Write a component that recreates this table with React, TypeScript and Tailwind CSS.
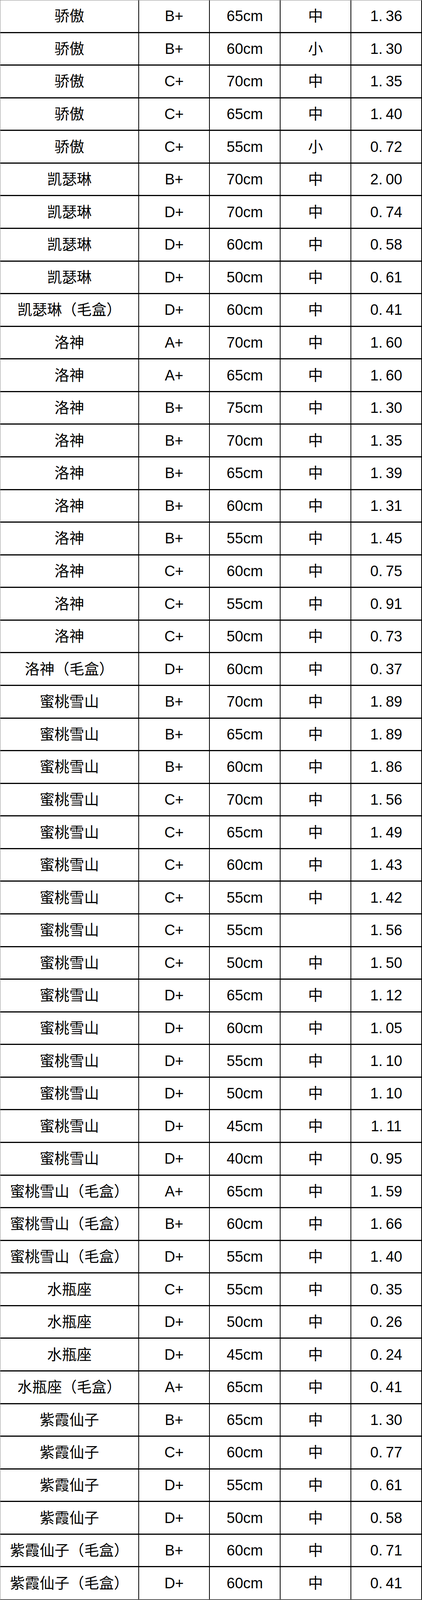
const rows: [string, string, string, string, string][] = [
  ['骄傲', 'B+', '65cm', '中', '1.36'],
  ['骄傲', 'B+', '60cm', '小', '1.30'],
  ['骄傲', 'C+', '70cm', '中', '1.35'],
  ['骄傲', 'C+', '65cm', '中', '1.40'],
  ['骄傲', 'C+', '55cm', '小', '0.72'],
  ['凯瑟琳', 'B+', '70cm', '中', '2.00'],
  ['凯瑟琳', 'D+', '70cm', '中', '0.74'],
  ['凯瑟琳', 'D+', '60cm', '中', '0.58'],
  ['凯瑟琳', 'D+', '50cm', '中', '0.61'],
  ['凯瑟琳（毛盒）', 'D+', '60cm', '中', '0.41'],
  ['洛神', 'A+', '70cm', '中', '1.60'],
  ['洛神', 'A+', '65cm', '中', '1.60'],
  ['洛神', 'B+', '75cm', '中', '1.30'],
  ['洛神', 'B+', '70cm', '中', '1.35'],
  ['洛神', 'B+', '65cm', '中', '1.39'],
  ['洛神', 'B+', '60cm', '中', '1.31'],
  ['洛神', 'B+', '55cm', '中', '1.45'],
  ['洛神', 'C+', '60cm', '中', '0.75'],
  ['洛神', 'C+', '55cm', '中', '0.91'],
  ['洛神', 'C+', '50cm', '中', '0.73'],
  ['洛神（毛盒）', 'D+', '60cm', '中', '0.37'],
  ['蜜桃雪山', 'B+', '70cm', '中', '1.89'],
  ['蜜桃雪山', 'B+', '65cm', '中', '1.89'],
  ['蜜桃雪山', 'B+', '60cm', '中', '1.86'],
  ['蜜桃雪山', 'C+', '70cm', '中', '1.56'],
  ['蜜桃雪山', 'C+', '65cm', '中', '1.49'],
  ['蜜桃雪山', 'C+', '60cm', '中', '1.43'],
  ['蜜桃雪山', 'C+', '55cm', '中', '1.42'],
  ['蜜桃雪山', 'C+', '55cm', '', '1.56'],
  ['蜜桃雪山', 'C+', '50cm', '中', '1.50'],
  ['蜜桃雪山', 'D+', '65cm', '中', '1.12'],
  ['蜜桃雪山', 'D+', '60cm', '中', '1.05'],
  ['蜜桃雪山', 'D+', '55cm', '中', '1.10'],
  ['蜜桃雪山', 'D+', '50cm', '中', '1.10'],
  ['蜜桃雪山', 'D+', '45cm', '中', '1.11'],
  ['蜜桃雪山', 'D+', '40cm', '中', '0.95'],
  ['蜜桃雪山（毛盒）', 'A+', '65cm', '中', '1.59'],
  ['蜜桃雪山（毛盒）', 'B+', '60cm', '中', '1.66'],
  ['蜜桃雪山（毛盒）', 'D+', '55cm', '中', '1.40'],
  ['水瓶座', 'C+', '55cm', '中', '0.35'],
  ['水瓶座', 'D+', '50cm', '中', '0.26'],
  ['水瓶座', 'D+', '45cm', '中', '0.24'],
  ['水瓶座（毛盒）', 'A+', '65cm', '中', '0.41'],
  ['紫霞仙子', 'B+', '65cm', '中', '1.30'],
  ['紫霞仙子', 'C+', '60cm', '中', '0.77'],
  ['紫霞仙子', 'D+', '55cm', '中', '0.61'],
  ['紫霞仙子', 'D+', '50cm', '中', '0.58'],
  ['紫霞仙子（毛盒）', 'B+', '60cm', '中', '0.71'],
  ['紫霞仙子（毛盒）', 'D+', '60cm', '中', '0.41'],
];

// 1.36 -> "1." + "36", the sheet shows a wide gap after the point
function Price({ value }: { value: string }) {
  const [a, b] = value.split('.');
  return (
    <span>
      {a}.<span className="ml-[8px]">{b}</span>
    </span>
  );
}

const cell = 'flex items-center justify-center border-r-2 border-black text-[38px] leading-none';

export default function App() {
  return (
    <div
      className="w-[1080px] h-screen bg-white text-black border-t border-l border-[#8a8a8a] grid grid-rows-[repeat(49,minmax(0,1fr))] overflow-hidden"
      style={{ fontFamily: '"Liberation Sans Narrow", "Liberation Sans", "Noto Sans CJK SC", sans-serif' }}
    >
      {rows.map((r, i) => (
        <div
          key={i}
          className={`grid grid-cols-[355px_181px_181px_181px_1fr] ${
            i === rows.length - 1 ? 'border-b-2 border-[#555]' : 'border-b-[3px] border-black'
          }`}
        >
          <div className={cell}>{r[0]}</div>
          <div className={cell}>{r[1]}</div>
          <div className={cell}>{r[2]}</div>
          <div className={cell}>{r[3]}</div>
          <div className={cell}>
            <Price value={r[4]} />
          </div>
        </div>
      ))}
    </div>
  );
}
